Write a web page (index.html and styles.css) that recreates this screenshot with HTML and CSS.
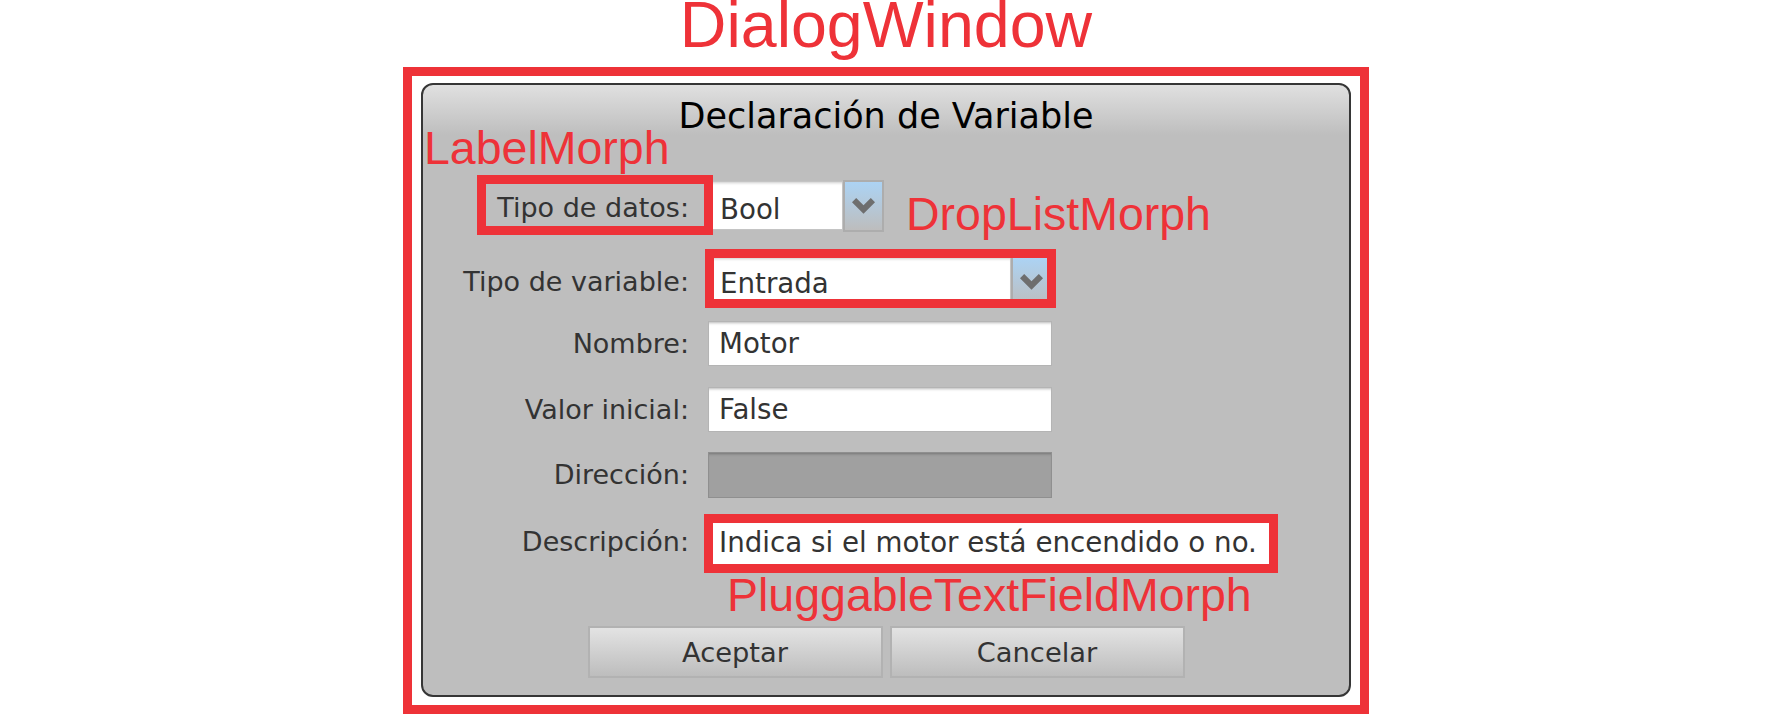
FILE: index.html
```html
<!DOCTYPE html>
<html lang="es">
<head>
<meta charset="utf-8">
<title>DialogWindow</title>
<link rel="stylesheet" href="styles.css">
</head>
<body>
<div class="page">
  <div class="heading">DialogWindow</div>
  <div class="frame">
    <div class="dialog">
      <div class="dialog-title">Declaración de Variable</div>
      <div class="form">
        <div class="row row-datos">
          <span class="label">Tipo de datos:</span>
          <div class="droplist droplist-short">
            <span class="droplist-value">Bool</span>
            <span class="droplist-btn"><svg class="chevron" width="23" height="16" viewBox="0 0 23 16"><path d="M0 4.2 L4.2 0 L11.5 7.3 L18.8 0 L23 4.2 L11.5 15.7 Z"/></svg></span>
          </div>
        </div>
        <div class="row row-variable">
          <span class="label">Tipo de variable:</span>
          <div class="droplist droplist-long">
            <span class="droplist-value">Entrada</span>
            <span class="droplist-btn"><svg class="chevron" width="23" height="16" viewBox="0 0 23 16"><path d="M0 4.2 L4.2 0 L11.5 7.3 L18.8 0 L23 4.2 L11.5 15.7 Z"/></svg></span>
          </div>
        </div>
        <div class="row row-nombre">
          <span class="label">Nombre:</span>
          <div class="field">Motor</div>
        </div>
        <div class="row row-valor">
          <span class="label">Valor inicial:</span>
          <div class="field">False</div>
        </div>
        <div class="row row-direccion">
          <span class="label">Dirección:</span>
          <div class="field field-disabled"></div>
        </div>
        <div class="row row-descripcion">
          <span class="label">Descripción:</span>
          <div class="field field-wide">Indica si el motor está encendido o no.</div>
        </div>
      </div>
      <div class="buttons">
        <div class="btn">Aceptar</div>
        <div class="btn">Cancelar</div>
      </div>
    </div>
  </div>

  <div class="annot-box box-label"></div>
  <div class="annot-box box-drop"></div>
  <div class="annot-box box-text"></div>
  <div class="annot annot-label">LabelMorph</div>
  <div class="annot annot-drop">DropListMorph</div>
  <div class="annot annot-text">PluggableTextFieldMorph</div>
</div>
</body>
</html>
```

FILE: styles.css
```css
html, body {
  margin: 0;
  padding: 0;
  background: #ffffff;
}

.page {
  position: relative;
  width: 1772px;
  height: 714px;
  overflow: hidden;
  font-family: "DejaVu Sans", "Noto Sans", sans-serif;
}

.heading {
  height: 67px;
  font-family: "Liberation Sans", Arial, sans-serif;
  font-size: 64.5px;
  line-height: 50px;
  text-align: center;
  color: #ee3238;
}

.frame {
  box-sizing: border-box;
  width: 966px;
  margin: 0 auto;
  border: 9px solid #ee3238;
  padding: 7px 9px 8px 9px;
  background: #ffffff;
}

.dialog {
  box-sizing: border-box;
  height: 614px;
  border: 2px solid #363636;
  border-radius: 12px;
  background: linear-gradient(to bottom, #e0e0e0 0px, #bebebe 50px, #bebebe 100%);
  color: #333333;
}

.dialog-title {
  padding-top: 11px;
  font-size: 35px;
  line-height: 40px;
  text-align: center;
  color: #000000;
}

.form {
  display: flex;
  flex-direction: column;
}

.row {
  display: grid;
  grid-template-columns: 266px auto;
  column-gap: 19px;
  align-items: center;
  justify-items: start;
}

.row-datos { margin-top: 44px; height: 52px; }
.row-variable { margin-top: 24px; height: 52px; }
.row-nombre { margin-top: 13px; height: 45px; }
.row-valor { margin-top: 21px; height: 45px; }
.row-direccion { margin-top: 20px; height: 46px; }
.row-descripcion { margin-top: 21px; height: 46px; }

.label {
  justify-self: end;
  font-size: 27px;
  line-height: 32px;
  color: #333333;
  white-space: nowrap;
}

.row-datos .label {
  padding-top: 3px;
}

.field {
  box-sizing: border-box;
  width: 344px;
  height: 100%;
  display: flex;
  align-items: center;
  padding: 0 10px;
  background: #ffffff;
  border: 1px solid #b4b4b4;
  box-shadow: inset 0 3px 3px -2px rgba(0, 0, 0, 0.28);
  font-size: 27.7px;
  color: #333333;
  white-space: nowrap;
}

.field-wide {
  width: 564px;
}

.field-disabled {
  background: #a0a0a0;
  border-color: #8f8f8f;
}

.droplist {
  display: flex;
  height: 100%;
}

.droplist-short { width: 176px; }
.droplist-long { width: 344px; }

.droplist-value {
  flex: 1;
  box-sizing: border-box;
  margin: 1px 0 2px 0;
  display: flex;
  align-items: center;
  padding: 4px 0 0 11px;
  background: #ffffff;
  border: 1px solid #c4c4c4;
  box-shadow: inset 0 3px 3px -2px rgba(0, 0, 0, 0.2);
  font-size: 27.7px;
  color: #333333;
  white-space: nowrap;
}

.row-datos .droplist-value {
  padding-top: 8px;
}

.droplist-btn {
  box-sizing: border-box;
  width: 41px;
  display: flex;
  align-items: center;
  justify-content: center;
  border: 2px solid #adadad;
  background: linear-gradient(to bottom, #acd3f4 0%, #bdbdbd 100%);
}

.chevron {
  display: block;
  fill: #6e6e6e;
}

.buttons {
  margin-top: 61px;
  display: flex;
  justify-content: center;
  gap: 7px;
}

.btn {
  box-sizing: border-box;
  width: 295px;
  height: 52px;
  display: flex;
  align-items: center;
  justify-content: center;
  border: 2px solid #b2b2b2;
  background: linear-gradient(to bottom, #e3e3e3 0%, #bdbdbd 100%);
  font-size: 27.3px;
  color: #333333;
}

.annot-box {
  position: absolute;
  box-sizing: border-box;
  border: 9px solid #ee3238;
}

.box-label { left: 477px; top: 175px; width: 236px; height: 60px; }
.box-drop { left: 705px; top: 249px; width: 351px; height: 59px; }
.box-text { left: 704px; top: 514px; width: 574px; height: 59px; }

.annot {
  position: absolute;
  font-family: "Liberation Sans", Arial, sans-serif;
  font-size: 46.5px;
  line-height: 46px;
  color: #ee3238;
  white-space: nowrap;
}

.annot-label { left: 424px; top: 125px; }
.annot-drop { left: 906px; top: 191px; }
.annot-text { left: 727px; top: 572px; }
```
